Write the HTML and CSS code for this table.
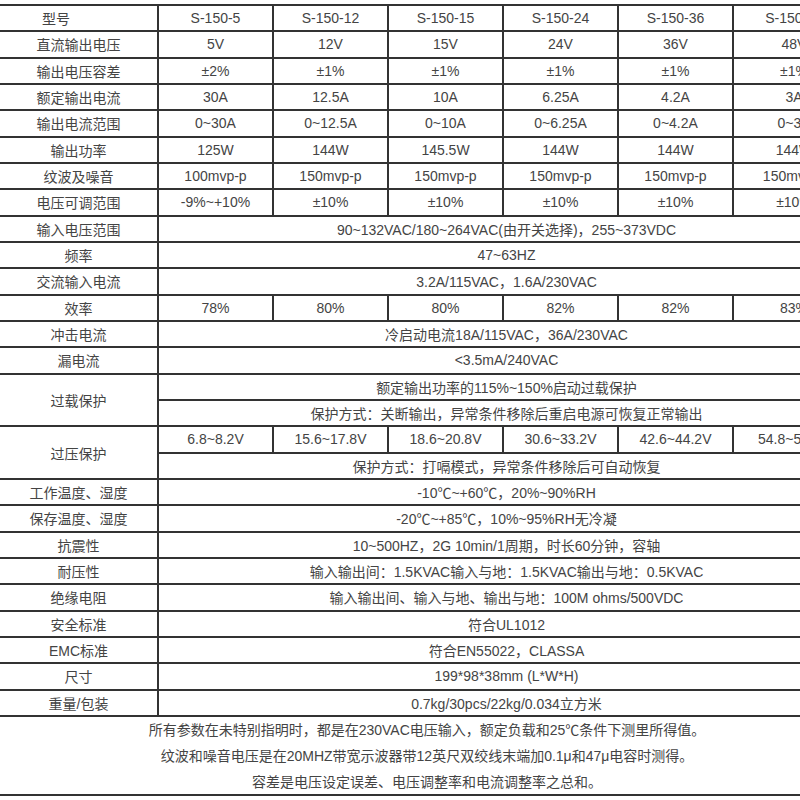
FILE: index.html
```html
<!DOCTYPE html>
<html lang="zh-CN">
<head>
<meta charset="utf-8">
<title>S-150 规格表</title>
<link rel="stylesheet" href="styles.css">
</head>
<body>
<div class="frame">
  <div class="sheet">
    <div class="c lbl first">型号</div>
    <div class="c">S-150-5</div><div class="c">S-150-12</div><div class="c">S-150-15</div><div class="c">S-150-24</div><div class="c">S-150-36</div><div class="c">S-150-48</div>

    <div class="c lbl">直流输出电压</div>
    <div class="c">5V</div><div class="c">12V</div><div class="c">15V</div><div class="c">24V</div><div class="c">36V</div><div class="c">48V</div>

    <div class="c lbl">输出电压容差</div>
    <div class="c">±2%</div><div class="c">±1%</div><div class="c">±1%</div><div class="c">±1%</div><div class="c">±1%</div><div class="c">±1%</div>

    <div class="c lbl">额定输出电流</div>
    <div class="c">30A</div><div class="c">12.5A</div><div class="c">10A</div><div class="c">6.25A</div><div class="c">4.2A</div><div class="c">3A</div>

    <div class="c lbl">输出电流范围</div>
    <div class="c">0~30A</div><div class="c">0~12.5A</div><div class="c">0~10A</div><div class="c">0~6.25A</div><div class="c">0~4.2A</div><div class="c">0~3A</div>

    <div class="c lbl">输出功率</div>
    <div class="c">125W</div><div class="c">144W</div><div class="c">145.5W</div><div class="c">144W</div><div class="c">144W</div><div class="c">144W</div>

    <div class="c lbl">纹波及噪音</div>
    <div class="c">100mvp-p</div><div class="c">150mvp-p</div><div class="c">150mvp-p</div><div class="c">150mvp-p</div><div class="c">150mvp-p</div><div class="c">150mvp-p</div>

    <div class="c lbl">电压可调范围</div>
    <div class="c">-9%~+10%</div><div class="c">±10%</div><div class="c">±10%</div><div class="c">±10%</div><div class="c">±10%</div><div class="c">±10%</div>

    <div class="c lbl">输入电压范围</div>
    <div class="c wide">90~132VAC/180~264VAC(由开关选择)，255~373VDC</div>

    <div class="c lbl">频率</div>
    <div class="c wide">47~63HZ</div>

    <div class="c lbl">交流输入电流</div>
    <div class="c wide">3.2A/115VAC，1.6A/230VAC</div>

    <div class="c lbl">效率</div>
    <div class="c">78%</div><div class="c">80%</div><div class="c">80%</div><div class="c">82%</div><div class="c">82%</div><div class="c">83%</div>

    <div class="c lbl">冲击电流</div>
    <div class="c wide">冷启动电流18A/115VAC，36A/230VAC</div>

    <div class="c lbl">漏电流</div>
    <div class="c wide">&lt;3.5mA/240VAC</div>

    <div class="c lbl tall">过载保护</div>
    <div class="c wide">额定输出功率的115%~150%启动过载保护</div>
    <div class="c wide">保护方式：关断输出，异常条件移除后重启电源可恢复正常输出</div>

    <div class="c lbl tall">过压保护</div>
    <div class="c">6.8~8.2V</div><div class="c">15.6~17.8V</div><div class="c">18.6~20.8V</div><div class="c">30.6~33.2V</div><div class="c">42.6~44.2V</div><div class="c">54.8~57.6V</div>
    <div class="c wide">保护方式：打嗝模式，异常条件移除后可自动恢复</div>

    <div class="c lbl">工作温度、湿度</div>
    <div class="c wide">-10℃~+60℃，20%~90%RH</div>

    <div class="c lbl">保存温度、湿度</div>
    <div class="c wide">-20℃~+85℃，10%~95%RH无冷凝</div>

    <div class="c lbl">抗震性</div>
    <div class="c wide">10~500HZ，2G 10min/1周期，时长60分钟，容轴</div>

    <div class="c lbl">耐压性</div>
    <div class="c wide">输入输出间：1.5KVAC输入与地：1.5KVAC输出与地：0.5KVAC</div>

    <div class="c lbl">绝缘电阻</div>
    <div class="c wide">输入输出间、输入与地、输出与地：100M ohms/500VDC</div>

    <div class="c lbl">安全标准</div>
    <div class="c wide">符合UL1012</div>

    <div class="c lbl">EMC标准</div>
    <div class="c wide">符合EN55022，CLASSA</div>

    <div class="c lbl">尺寸</div>
    <div class="c wide">199*98*38mm (L*W*H)</div>

    <div class="c lbl">重量/包装</div>
    <div class="c wide">0.7kg/30pcs/22kg/0.034立方米</div>

    <div class="c notes">
      <p>所有参数在未特别指明时，都是在230VAC电压输入，额定负载和25℃条件下测里所得值。</p>
      <p>纹波和噪音电压是在20MHZ带宽示波器带12英尺双绞线末端加0.1μ和47μ电容时测得。</p>
      <p>容差是电压设定误差、电压调整率和电流调整率之总和。</p>
    </div>
  </div>
</div>
</body>
</html>
```

FILE: styles.css
```css
html, body {
  margin: 0;
  padding: 0;
  background: #fff;
}

body {
  overflow: hidden;
  width: 800px;
  height: 800px;
}

.frame {
  padding-top: 4px;
}

.sheet {
  display: grid;
  grid-template-columns: 157px repeat(5, 113px) 120px;
  grid-auto-rows: 24.33px;
  gap: 2px;
  padding: 2px 2px 2px 0;
  width: max-content;
  background: #333;
  font-family: "Liberation Sans", "Noto Sans CJK SC", sans-serif;
  font-size: 14px;
  color: #444;
}

.c {
  background: #fff;
  display: flex;
  align-items: center;
  justify-content: center;
  white-space: nowrap;
  overflow: hidden;
}

.lbl.first {
  justify-content: flex-start;
  padding-left: 42px;
}

.wide {
  grid-column: 2 / -1;
}

.tall {
  grid-row: span 2;
}

.notes {
  grid-column: 1 / -1;
  grid-row: span 3;
  flex-direction: column;
  justify-content: space-around;
  padding: 0 0 2px 0;
  color: #444;
}

.notes p {
  margin: 0;
  line-height: 26px;
  font-family: "Liberation Sans", "Noto Sans CJK SC", "Noto Sans CJK TC", sans-serif;
  color: #444;
}
```
